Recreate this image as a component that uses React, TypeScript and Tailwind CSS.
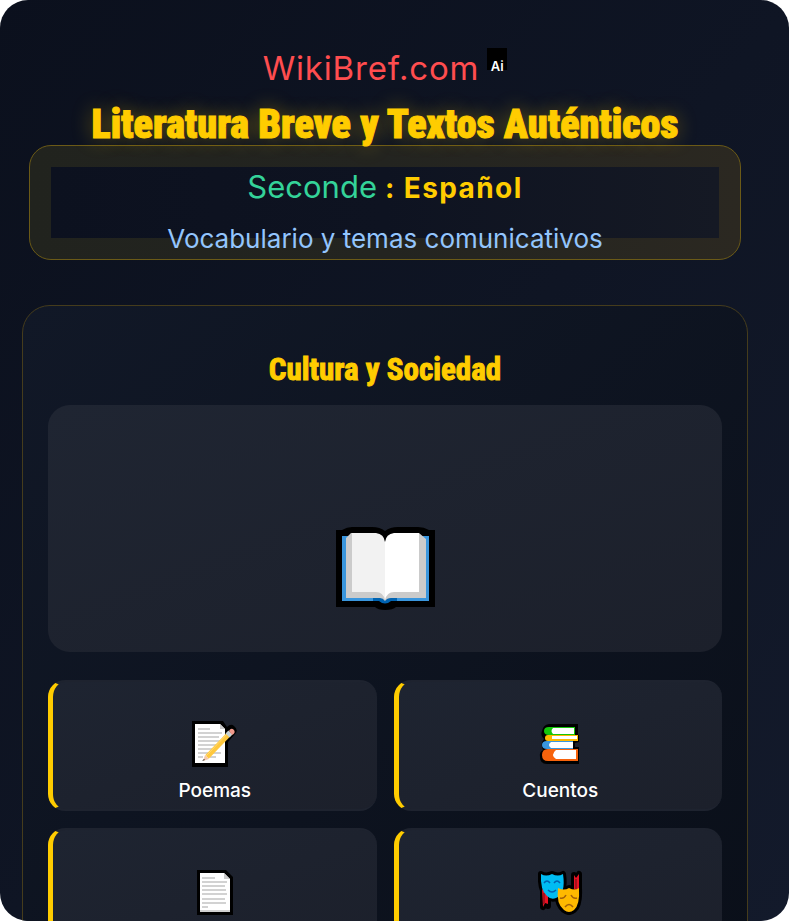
import React from 'react';

const BookIcon = () => (
  <svg viewBox="0 0 99 83" className="w-[99px] h-[83px]" aria-hidden="true">
    <path d="M0 3H6Q11 0 16 0H36Q44 0 49 4Q54 0 62 0H82Q88 0 93 3H99V80H60Q57 83 49 83Q42 83 39 80H0Z" fill="#000" />
    <path d="M6 9H93V74H6Z" fill="#3a96dd" />
    <path d="M37 71H61V74H55Q49 79 43 74H37Z" fill="#0063b1" />
    <path d="M10 11L15 6H83L90 12V71H55Q51 71 49 74Q47 71 44 71H10Z" fill="#cbcbcb" />
    <path d="M16 6H40Q49 6 49 15V73Q47 65 40 65H16Z" fill="#f2f2f2" />
    <path d="M83 6H58Q49 6 49 15V73Q51 65 58 65H83Z" fill="#fff" />
    <path d="M40 6H58Q50 7 49 15Q48 7 40 6Z" fill="#000" />
  </svg>
);

const MemoIcon = () => (
  <svg viewBox="0 0 46 46" className="w-[46px] h-[46px]" aria-hidden="true">
    <path d="M0 0H31L35 6Q39 2 42 5Q47 9 43 13L36 21V46H0Z" fill="#000" />
    <path d="M3 3H28L33 8V42H3Z" fill="#fff" />
    <path d="M28 3V8H33Z" fill="#cbcbcb" />
    <path d="M6 8H18M6 12H30M6 16H27M6 20H30M6 24H28M6 28H25M6 32H29M6 36H11M18 36H24" stroke="#a5a5a5" />
    <path d="M15 36L38 12" stroke="#ffc83d" strokeWidth="5" />
    <path d="M14 35L37 11" stroke="#ffda73" strokeWidth="1" />
    <path d="M35 11L39 15" stroke="#c4d0d5" strokeWidth="4" />
    <path d="M37 10Q39 6 42 9Q44 12 40 14Z" fill="#f1998b" />
    <path d="M13 34L17 38L11 40Z" fill="#f4c9ac" />
    <path d="M12 38L13 39L10 40Z" fill="#333" />
  </svg>
);

const BooksIcon = () => (
  <svg viewBox="0 0 42 40" className="w-[42px] h-[40px]" aria-hidden="true">
    <path d="M10 0H39V11H40V18L36 19V23H40V40H8Q1 40 1 33Q0 28 4 26Q1 20 5 15Q1 11 3 7Q4 1 10 0Z" fill="#000" />
    <path d="M10 3H36V11H10Q5 11 5 7T10 3Z" fill="#16c60c" />
    <path d="M14 4H35V10H14Q11 7 14 4Z" fill="#fff" />
    <path d="M9 11H39V17H9Q6 17 6 14T9 11Z" fill="#ffb900" />
    <path d="M13 12H38V15H13Z" fill="#fff" />
    <path d="M8 17H34V25H8Q3 25 3 21T8 17Z" fill="#3a96dd" />
    <path d="M12 18H34V24H12Q8 21 12 18Z" fill="#fff" />
    <path d="M9 25H39V37H9Q3 37 3 31T9 25Z" fill="#f7630c" />
    <path d="M17 26H37V35H17Q11 31 17 26Z" fill="#fff" />
  </svg>
);

const PageIcon = () => (
  <svg viewBox="0 0 36 45" className="w-[36px] h-[45px]" aria-hidden="true">
    <path d="M0 0H29L36 7V45H0Z" fill="#000" />
    <path d="M3 3H27L33 9V42H3Z" fill="#fff" />
    <path d="M27 3V9H33Z" fill="#cbcbcb" />
    <path d="M5 8H18M5 12H30M5 16H28M5 20H29M5 24H30M5 29H28M5 33H29M5 37H11" stroke="#a5a5a5" />
    <path d="M3 41H33" stroke="#a5a5a5" />
  </svg>
);

const MasksIcon = () => (
  <svg viewBox="0 0 45 45" className="w-[45px] h-[45px]" aria-hidden="true">
    <path d="M5 18H10V36L7 34L5 37Z M36 5L38 8L41 4V25L36 19Z" fill="#000" stroke="#000" strokeWidth="6" strokeLinejoin="round" />
    <path d="M3 4Q8 7 14 4Q20 7 25 4Q28 24 18 28Q13 30 9 26Q2 20 3 4Z M20 18Q26 21 31 18Q37 21 41 18Q42 35 36 40Q31 44 26 40Q18 34 20 18Z" fill="#000" stroke="#000" strokeWidth="6" strokeLinejoin="round" />
    <path d="M4 19L10 24V34L7 33L5 37Z M36 5L38 8L41 4V25L36 19Z" fill="#e81224" />
    <path d="M6 23V34M38 9V20" stroke="#a80f1d" strokeWidth="2" />
    <path d="M3 4Q8 7 14 4Q20 7 25 4Q28 24 18 28Q13 30 9 26Q2 20 3 4Z" fill="#00bcf2" />
    <path d="M6 13Q9 9 12 13M16 13Q19 9 22 13M10 20Q14 24 18 20" fill="none" stroke="#0063b1" strokeWidth="1.5" />
    <path d="M20 18Q26 21 31 18Q37 21 41 18Q42 35 36 40Q31 44 26 40Q18 34 20 18Z" fill="#ffb900" />
    <path d="M22 28Q26 29 28 25M33 25Q35 29 39 28M27 37Q31 32 35 37" fill="none" stroke="#a4610a" strokeWidth="1.5" />
  </svg>
);

const topics = [
  { id: 1, name: 'Poemas', icon: <MemoIcon /> },
  { id: 2, name: 'Cuentos', icon: <BooksIcon /> },
  { id: 3, name: '', icon: <PageIcon /> },
  { id: 4, name: '', icon: <MasksIcon /> },
];

export default function App() {
  return (
    <div className="h-screen overflow-hidden rounded-[28px] bg-linear-to-br from-[#0b101d] to-[#131a2b] pl-[22px] pr-[41px] font-['Inter',sans-serif]">
      <header className="px-[7px] pt-11 text-center">
        <div className="flex justify-center items-start gap-2">
          <a href="#inicio" className="text-[33px] leading-[48px] tracking-wide text-[#ff4d4f]">WikiBref.com</a>
          <span className="mt-1 h-[22px] w-5 bg-black text-[13px] leading-9 font-semibold text-white">Ai</span>
        </div>
        <h1 className="mt-2 text-[40px] leading-[50px] font-black text-[#ffcc00] whitespace-nowrap font-['Roboto_Condensed','Roboto',sans-serif] [-webkit-text-stroke:1px_#ffcc00] [text-shadow:0_0_20px_rgba(255,204,0,0.4)]">
          Literatura Breve y Textos Auténticos
        </h1>
        <div className="-mt-[5px] rounded-[22px] border border-[#6b5a17] bg-linear-to-r from-[#21231e] via-[#232420] to-[#2b2821] p-[21px]">
          <div className="flex flex-col bg-linear-to-r from-[#0c111f] via-[#0e1321] to-[#151924]">
            <h2 className="h-10 text-[28px] leading-[39px] font-bold tracking-wider text-[#ffcc00]">
              <span className="text-[31px] font-normal tracking-normal text-[#34d399]">Seconde</span> : Español
            </h2>
            <p className="mt-[11px] -mb-[22px] text-[26px] leading-[42px] text-[#93c5fd]">Vocabulario y temas comunicativos</p>
          </div>
        </div>
      </header>

      <main className="mt-[45px] rounded-[28px] border border-[#453c1c] bg-linear-to-br from-[#111827] to-[#0a0f19] px-[25px] pb-8">
        <h2 className="pt-11 pb-[15px] text-center text-[31px] leading-10 font-bold text-[#ffcc00] font-['Roboto_Condensed','Roboto',sans-serif] [-webkit-text-stroke:1px_#ffcc00]">
          Cultura y Sociedad
        </h2>
        <div className="flex items-end justify-center h-[247px] pb-[42px] rounded-[22px] bg-linear-to-br from-[#1f2532] to-[#1c202b]">
          <BookIcon />
        </div>
        <div className="mt-7 grid grid-cols-2 gap-[17px]">
          {topics.map((t) => (
            <button
              key={t.id}
              type="button"
              className="flex flex-col items-center h-[131px] pt-[38px] rounded-[17px] border-y-2 border-l-[5px] border-y-[#1e232f] border-l-[#ffcc00] bg-linear-to-br from-[#1e2431] to-[#1c202b] text-white"
            >
              <span className="flex items-center justify-center h-12">{t.icon}</span>
              {t.name && <span className="mt-[9px] text-[19px] leading-7 font-medium">{t.name}</span>}
            </button>
          ))}
        </div>
      </main>
    </div>
  );
}
